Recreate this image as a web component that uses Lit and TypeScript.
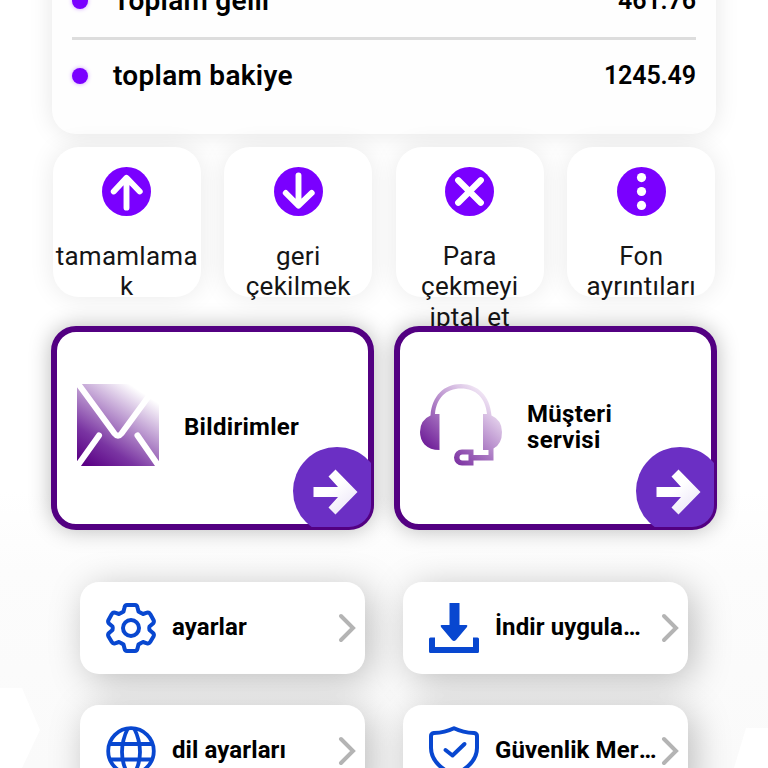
import { LitElement, html, svg, css } from 'lit';
import { customElement, property } from 'lit/decorators.js';

const icons: Record<string, unknown> = {
	up: svg`<path d="M25 41.500V12M12 25 25 11 38.500 25" fill="none" stroke="#fff" stroke-width="6" stroke-linecap="round" stroke-linejoin="round" />`,
	down: svg`<path d="M25 8.500V38M12 26.500 25 39.500 38.500 26.500" fill="none" stroke="#fff" stroke-width="6" stroke-linecap="round" stroke-linejoin="round" />`,
	cancel: svg`<path d="M13.500 13.500 36.500 36.500M36.500 13.500 13.500 36.500" fill="none" stroke="#fff" stroke-width="6.400" stroke-linecap="round" />`,
	more: svg`<g fill="#fff"><circle cx="25" cy="10.800" r="4.700" /><circle cx="25" cy="25" r="4.700" /><circle cx="25" cy="39.200" r="4.700" /></g>`,
	mail: svg`
		<defs>
			<linearGradient id="mail" x1="0.2" y1="1.05" x2="0.82" y2="0.12">
				<stop offset="0" stop-color="#5a0085" />
				<stop offset="0.3" stop-color="#7a35a2" />
				<stop offset="1" stop-color="#fff" />
			</linearGradient>
		</defs>
		<rect width="82" height="82" rx="2" fill="url(#mail)" />
		<path d="M2 1 37.500 49.500Q41 54 44.500 49.500L80 1M22 51.500 1 81M60.500 51.500 81 81" fill="none" stroke="#fff" stroke-width="6" stroke-linecap="round" />
	`,
	headset: svg`
		<defs>
			<linearGradient id="headset" gradientUnits="userSpaceOnUse" x1="15" y1="75" x2="70" y2="15">
				<stop offset="0" stop-color="#6a1695" />
				<stop offset="1" stop-color="#f1e6f5" />
			</linearGradient>
		</defs>
		<g fill="url(#headset)" fill-rule="evenodd">
			<path d="M10.500 31.500C12 12 24 0 41 0S70 12 71.500 31.500Q82 36 82 48 82 60 73.500 64.500V76.500H53.500V81.500H42A8 8 0 0 1 42 65.500H53.500V71H68.500V66H63V30H67C65.500 14 56 4.500 41 4.500S16.500 14 15 30H19.500V66Q10 66 4.500 60.500 0 55 0 48 0 36 10.500 31.500ZM42.500 70.500A3 3 0 0 0 42.500 76.500H48.500V70.500Z" />
		</g>
	`,
	gear: svg`
		<g fill="none" stroke="#0847d0" stroke-width="4" stroke-linejoin="round">
			<path d="M18.500 4.500Q19 2 21 2H29Q31 2 31.500 4.500L32.500 8.500Q34.500 9.800 37 11L41 9.700Q43 9.200 44.200 11L47.500 17Q48.500 19 47 20.500L43.500 23.500Q43 25 43.500 27L47 30Q48.500 31.500 47.500 33.500L44.200 39Q43 41 41 40.300L37 39Q34.500 40.200 32.500 41.500L31.500 45.500Q31 48 29 48H21Q19 48 18.500 45.500L17.500 41.500Q15.500 40.200 13 39L9 40.300Q7 41 5.800 39L2.500 33.500Q1.500 31.500 3 30L6.500 27Q7 25 6.500 23.500L3 20.500Q1.500 19 2.500 17L5.800 11Q7 9.200 9 9.700L13 11Q15.500 9.800 17.500 8.500Z" />
			<circle cx="25" cy="25" r="8" />
		</g>
	`,
	globe: svg`
		<g fill="none" stroke="#0847d0" stroke-width="3.800">
			<circle cx="25" cy="25" r="22.800" />
			<path d="M4 18H46M4 33.500H46M22 2Q16 14 16 26T22 48M28 2Q34 14 34 26T28 48" />
		</g>
	`,
	download: svg`
		<g fill="#0847d0">
			<path d="M20.500 0H30.500V22H37.500Q39 22 38 24L27 37Q25 39 23 37L12 24Q11 22 12.500 22H20.500Z" />
			<path d="M0 36Q0 34.500 1.500 34.500H6V44H44V34.500H48.500Q50 34.500 50 36V48.500Q50 50 48.500 50H1.500Q0 50 0 48.500Z" />
		</g>
	`,
	shield: svg`
		<g fill="none" stroke="#0847d0" stroke-width="4" stroke-linejoin="round" stroke-linecap="round">
			<path d="M25 2.200Q16 6.500 5 7 2 7.500 2 10V22C2 34 10 42 25 49 40 42 48 34 48 22V10Q48 7.500 45 7 34 6.500 25 2.200Z" />
			<path d="M16.500 24 23.500 29.500 35.500 18" />
		</g>
	`,
};

@customElement('balance-row')
export class BalanceRow extends LitElement {
	static styles = css`
		:host {
			display: flex;
			align-items: center;
			height: 72px;
			color: #000;
		}

		.dot {
			width: 16px;
			height: 16px;
			margin-right: 25px;
			border-radius: 50%;
			background: #7a00ff;
			box-shadow: 0 0 4px #c9f;
		}

		.label {
			flex: 1;
			font-size: 28px;
			font-weight: 600;
			letter-spacing: 0.3px;
			padding-bottom: 1px;
		}

		.amount {
			font-size: 25px;
			font-weight: 600;
			letter-spacing: -0.1px;
			padding-bottom: 2px;
		}
	`;

	@property() label = '';
	@property() amount = '';

	render() {
		return html`
			<span class="dot"></span>
			<span class="label">${this.label}</span>
			<span class="amount">${this.amount}</span>
		`;
	}
}

@customElement('action-tile')
export class ActionTile extends LitElement {
	static styles = css`
		:host {
			display: flex;
			flex-direction: column;
			align-items: center;
			width: 148px;
			height: 150px;
			padding-top: 20px;
			box-sizing: border-box;
			border-radius: 26px;
			background: #fff;
			box-shadow: 0 0 26px rgba(0, 0, 0, 0.09);
		}

		svg {
			width: 49px;
			height: 49px;
			flex: none;
		}

		.label {
			width: 100%;
			margin-top: 25px;
			font-size: 26px;
			letter-spacing: 0.25px;
			line-height: 30.300px;
			text-align: center;
			overflow-wrap: anywhere;
			color: #151515;
		}
	`;

	@property() label = '';
	@property() icon = '';

	render() {
		return html`
			<svg viewBox="0 0 50 50">
				<circle cx="25" cy="25" r="25" fill="#7a00ff" />
				${icons[this.icon]}
			</svg>
			<div class="label">${this.label}</div>
		`;
	}
}

@customElement('feature-card')
export class FeatureCard extends LitElement {
	static styles = css`
		:host {
			position: relative;
			display: flex;
			align-items: center;
			width: 323px;
			height: 204px;
			padding: 0 20px;
			box-sizing: border-box;
			border: 6px solid #530082;
			border-radius: 25px;
			background: #fff;
			box-shadow: 0 0 22px rgba(0, 0, 0, 0.28);
		}

		.icon {
			width: 82px;
			height: 82px;
			margin: -6px 25px 0 0;
			flex: none;
		}

		.label {
			width: 130px;
			font-size: 24px;
			font-weight: 700;
			letter-spacing: 0.3px;
			line-height: 26px;
			margin-top: -2px;
			color: #000;
		}

		/* The round button runs over the inner half of the border. */
		.corner {
			position: absolute;
			right: -3px;
			bottom: -3px;
			width: 78px;
			height: 80px;
			overflow: hidden;
			border-bottom-right-radius: 22px;
		}

		.arrow {
			display: block;
			width: 88px;
			height: 88px;
		}
	`;

	@property() label = '';
	@property() icon = '';

	render() {
		return html`
			<svg class="icon" viewBox="0 0 82 82">${icons[this.icon]}</svg>
			<div class="label">${this.label}</div>
			<div class="corner">
				<svg class="arrow" viewBox="0 0 88 88">
					<defs>
						<linearGradient id="tip" gradientUnits="userSpaceOnUse" x1="35" y1="30" x2="60" y2="62">
							<stop offset="0.3" stop-color="#fff" />
							<stop offset="1" stop-color="#ece6f8" />
						</linearGradient>
					</defs>
					<circle cx="44" cy="44" r="44" fill="#6b2fc4" />
					<path d="M20.500 40H45L35.500 29.500 42.500 22.500 64.500 45 42.500 67.500 35.500 60.500 45 50H20.500Z" fill="url(#tip)" />
				</svg>
			</div>
		`;
	}
}

@customElement('menu-item')
export class MenuItem extends LitElement {
	static styles = css`
		:host {
			display: flex;
			align-items: center;
			width: 285px;
			height: 92px;
			padding: 0 9px 0 26px;
			box-sizing: border-box;
			border-radius: 19px;
			background: #fff;
			box-shadow: 6px 6px 36px rgba(0, 0, 0, 0.25);
		}

		.icon {
			width: 50px;
			height: 50px;
			margin-right: 16px;
			flex: none;
			overflow: visible;
		}

		.label {
			flex: 1;
			min-width: 0;
			margin: -2px 4px 0 0;
			overflow: hidden;
			text-overflow: ellipsis;
			white-space: nowrap;
			font-size: 24px;
			font-weight: 700;
			letter-spacing: 0.1px;
			color: #000;
		}

		.chevron {
			width: 18px;
			height: 30px;
			flex: none;
		}
	`;

	@property() label = '';
	@property() icon = '';

	render() {
		return html`
			<svg class="icon" viewBox="0 0 50 50">${icons[this.icon]}</svg>
			<div class="label">${this.label}</div>
			<svg class="chevron" viewBox="0 0 18 30">
				<path d="M3 3 15 15 3 27" fill="none" stroke="#b4b4b4" stroke-width="4" stroke-linecap="round" />
			</svg>
		`;
	}
}

@customElement('app-root')
export class AppRoot extends LitElement {
	static styles = css`
		:host {
			display: block;
			position: relative;
			width: 768px;
			height: 768px;
			overflow: hidden;
			background: linear-gradient(#fff 490px, #fcfcfc 570px, #fafafa);
			font-family: Roboto, 'Liberation Sans', sans-serif;
		}

		.backdrop {
			position: absolute;
			inset: 0;
		}

		.page {
			position: relative;
			display: flex;
			flex-direction: column;
			align-items: center;
			margin-top: -55px;
		}

		.balances {
			width: 664px;
			height: 189px;
			padding: 20px 20px 0;
			box-sizing: border-box;
			border-radius: 24px;
			background: #fefefe;
			box-shadow: 0 0 24px rgba(0, 0, 0, 0.1);
		}

		.divider {
			height: 3px;
			background: #ddd;
		}

		.actions {
			display: flex;
			gap: 23.500px;
			margin-top: 13px;
		}

		.features {
			display: flex;
			gap: 20px;
			margin-top: 29px;
			position: relative;
		}

		.menu {
			display: grid;
			grid-template-columns: 285px 285px;
			gap: 31px 38px;
			margin-top: 52px;
		}
	`;

	render() {
		return html`
			<svg class="backdrop" width="768" height="768">
				<path d="M0 688H22L40 730 22 768H0ZM746 728H768V768H734Z" fill="#fff" />
			</svg>
			<div class="page">
				<section class="balances">
					<balance-row label="Toplam gelir" amount="461.76"></balance-row>
					<div class="divider"></div>
					<balance-row label="toplam bakiye" amount="1245.49"></balance-row>
				</section>
				<section class="actions">
					<action-tile icon="up" label="tamamlamak"></action-tile>
					<action-tile icon="down" label="geri çekilmek"></action-tile>
					<action-tile icon="cancel" label="Para çekmeyi iptal et"></action-tile>
					<action-tile icon="more" label="Fon ayrıntıları"></action-tile>
				</section>
				<section class="features">
					<feature-card icon="mail" label="Bildirimler"></feature-card>
					<feature-card icon="headset" label="Müşteri servisi"></feature-card>
				</section>
				<section class="menu">
					<menu-item icon="gear" label="ayarlar"></menu-item>
					<menu-item icon="download" label="İndir uygulaması"></menu-item>
					<menu-item icon="globe" label="dil ayarları"></menu-item>
					<menu-item icon="shield" label="Güvenlik Merkezi"></menu-item>
				</section>
			</div>
		`;
	}
}
